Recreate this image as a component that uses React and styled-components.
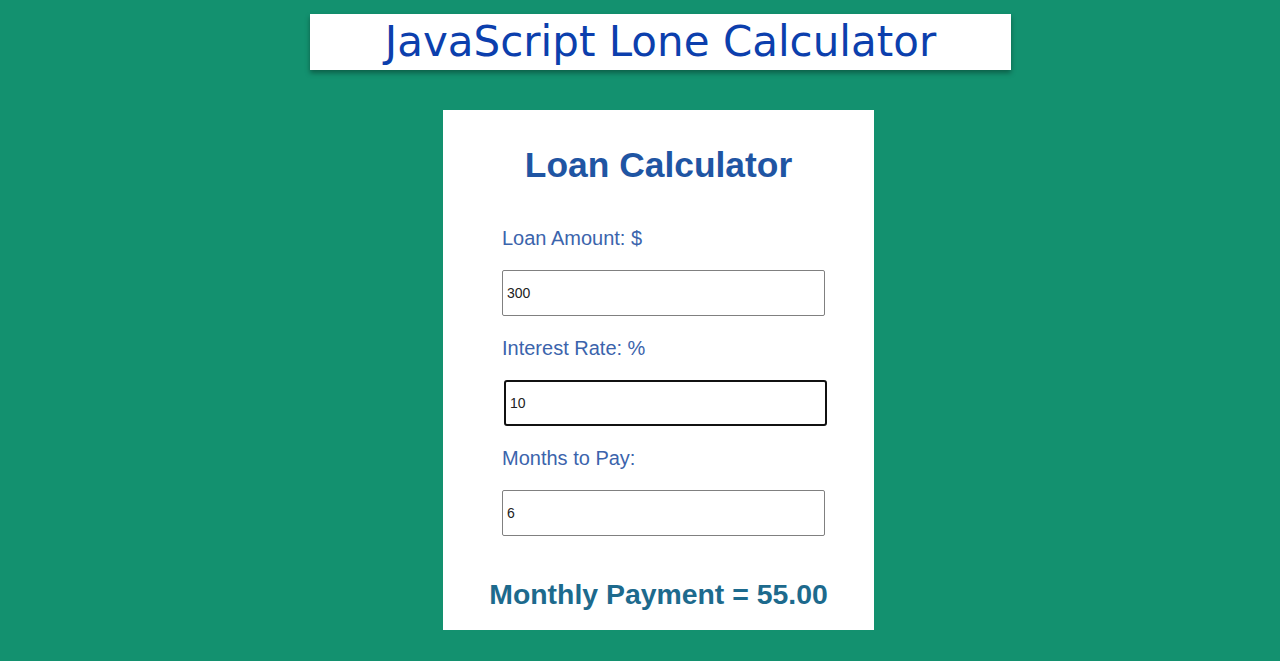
import React from "react";
import styled, { createGlobalStyle } from "styled-components";

const Global = createGlobalStyle`
  html, body { margin: 0; padding: 0; }
  body {
    background: #13916f;
    font-family: "Liberation Sans", Arial, sans-serif;
    min-height: 661px;
  }
`;

const Page = styled.div`
  display: flex;
  flex-direction: column;
  align-items: center;
  padding: 14px 0 0 41px;
`;

const TitleBar = styled.h1`
  margin: 0;
  width: 701px;
  height: 56px;
  background: #fff;
  box-shadow: 0 3px 5px rgba(0, 0, 0, 0.35);
  display: flex;
  align-items: center;
  justify-content: center;
  font-family: "DejaVu Sans", Verdana, sans-serif;
  font-weight: normal;
  font-size: 42px;
  line-height: 56px;
  color: #0c3fad;
`;

const Card = styled.div`
  margin-top: 40px;
  margin-left: -4px;
  width: 431px;
  height: 520px;
  box-sizing: border-box;
  background: #fff;
  padding: 34px 0 20px 59px;
  display: flex;
  flex-direction: column;
`;

const Heading = styled.h2`
  margin: 0 59px 40px 0;
  font-size: 35.4px;
  line-height: 42px;
  font-weight: bold;
  color: #1f55a3;
  text-align: center;
`;

const Field = styled.div`
  display: flex;
  flex-direction: column;
  align-items: flex-start;
  margin-bottom: 20px;
`;

const Label = styled.label`
  font-size: 20px;
  line-height: 24px;
  color: #3b64ac;
  margin-bottom: 20px;
`;

const Input = styled.input`
  width: 323px;
  height: 46px;
  box-sizing: border-box;
  margin: 0 0 0 ${(p) => (p.$focused ? "2px" : "0")};
  padding: 0 4px;
  font-family: "Liberation Sans", Arial, sans-serif;
  font-size: 14px;
  color: #222;
  background: #fff;
  border: ${(p) => (p.$focused ? "2px solid #111" : "1px solid #808080")};
  border-radius: ${(p) => (p.$focused ? "3px" : "2px")};
  outline: none;
`;

const Result = styled.div`
  margin: 21px 0 0 -59px;
  font-size: 28.4px;
  line-height: 34px;
  font-weight: bold;
  color: #1d6a8d;
  text-align: center;
`;

const fields = [
  { label: "Loan Amount: $", value: "300" },
  { label: "Interest Rate: %", value: "10", focused: true },
  { label: "Months to Pay:", value: "6" },
];

export default function App() {
  return (
    <>
      <Global />
      <Page>
        <TitleBar>JavaScript Lone Calculator</TitleBar>
        <Card>
          <Heading>Loan Calculator</Heading>
          {fields.map((f) => (
            <Field key={f.label}>
              <Label>{f.label}</Label>
              <Input $focused={f.focused} defaultValue={f.value} />
            </Field>
          ))}
          <Result>Monthly Payment = 55.00</Result>
        </Card>
      </Page>
    </>
  );
}
